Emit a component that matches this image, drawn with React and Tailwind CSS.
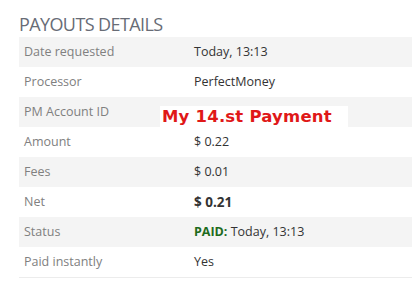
import React from 'react';

const rows = [
  { label: 'Date requested', value: 'Today, 13:13' },
  { label: 'Processor', value: 'PerfectMoney' },
  { label: 'PM Account ID', value: '' },
  { label: 'Amount', value: '$ 0.22' },
  { label: 'Fees', value: '$ 0.01' },
  { label: 'Net', value: '$ 0.21', bold: true },
  { label: 'Status', value: 'Today, 13:13', paid: true },
  { label: 'Paid instantly', value: 'Yes' },
];

const App = () => {
  return (
    <div className="relative w-[413px] h-[281px] bg-white overflow-hidden" style={{ fontFamily: '"Open Sans", "DejaVu Sans", sans-serif' }}>
      <h2 className="pl-[19px] pt-[13px] h-[37px] text-[18px] leading-[22px] text-[#686c76] tracking-[-0.6px]">PAYOUTS DETAILS</h2>
      <div className="ml-[19px] mr-[1px] border-b border-[#ececec]">
        {rows.map((row, i) => (
          <div key={row.label} className={`flex items-center h-[30px] pt-[1px] text-[12.5px] ${i % 2 === 0 ? 'bg-[#f4f4f4]' : 'bg-white'}`}>
            <div className="w-[175px] pl-[5px] text-[#808080]">{row.label}</div>
            <div className={`${row.bold ? 'font-bold text-[13.5px]' : ''} text-[#333]`}>
              {row.paid && <span className="font-bold text-[#1d6b1d]">PAID: </span>}
              {row.value}
            </div>
          </div>
        ))}
      </div>

      {/* overlay note */}
      <div className="absolute left-[160px] top-[106px] w-[188px] h-[22px] bg-white flex items-center pl-[2px]">
        <span className="text-[#e01818] font-bold text-[16.5px] leading-none tracking-[0.2px]" style={{ fontFamily: '"DejaVu Sans", sans-serif' }}>My 14.st Payment</span>
      </div>
    </div>
  );
};

export default App;
